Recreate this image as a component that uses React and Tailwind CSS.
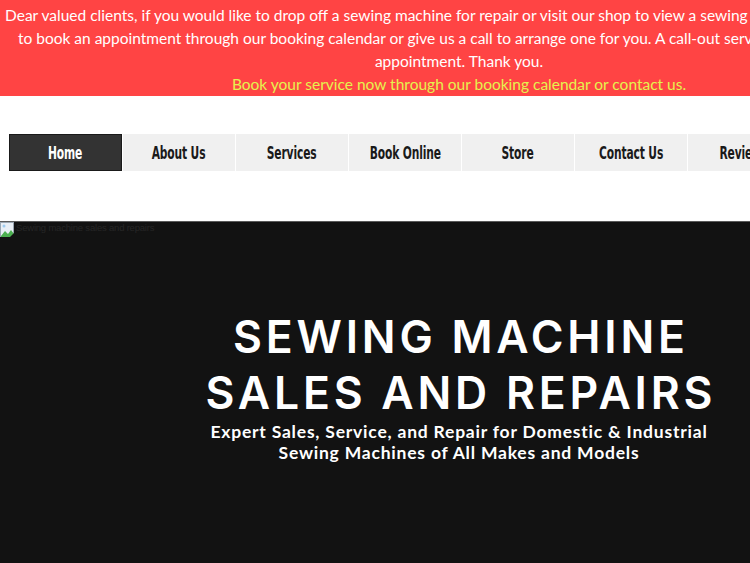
import React from 'react';

const navItems = ['Home', 'About Us', 'Services', 'Book Online', 'Store', 'Contact Us', 'Reviews', 'More'];

function BrokenImage() {
  return (
    <svg width="16" height="16" viewBox="0 0 16 16" className="shrink-0">
      <rect x="0.5" y="0.5" width="13" height="14" fill="#e8eef5" stroke="#9aa6b2" />
      <path d="M1 14 L5 9 L8 12 L11 8 L14 12 L14 15 L1 15 Z" fill="#4caf50" />
      <path d="M10 15 L16 9 L16 15 Z" fill="#121212" />
      <circle cx="4" cy="4" r="1.5" fill="#9ecbf0" />
    </svg>
  );
}

export default function App() {
  return (
    <div className="w-[750px] h-[563px] overflow-hidden bg-white">
      <div className="w-[918px]">
        {/* notice banner */}
        <div className="h-[96px] bg-[#ff4444] pt-[4px] text-center text-[15.5px] leading-[23px] text-white font-['Lato','Open_Sans',sans-serif]">
          <p className="whitespace-nowrap">Dear valued clients, if you would like to drop off a sewing machine for repair or visit our shop to view a sewing machine, please be sure</p>
          <p className="whitespace-nowrap">to book an appointment through our booking calendar or give us a call to arrange one for you. A call-out service is also available by</p>
          <p>appointment. Thank you.</p>
          <p className="text-[#e6f24e]">Book your service now through our booking calendar or contact us.</p>
        </div>

        {/* menu */}
        <div className="h-[125px] pt-[38px] pl-[9px]">
          <ul className="flex h-[37px] gap-[1px] font-['DejaVu_Sans_Condensed','DejaVu_Sans',sans-serif] font-bold text-[17.5px]">
            {navItems.map((item, i) => (
              <li
                key={item}
                className={
                  i === 0
                    ? 'w-[113px] flex items-center justify-center bg-[#333333] border border-[#1a1a1a] text-white'
                    : 'w-[112px] flex items-center justify-center bg-[#f0f0f0] text-[#1a1a1a]'
                }
              >
                <span className="inline-block whitespace-nowrap pt-[2px] scale-x-[0.68] tracking-[-0.2px]">{item}</span>
              </li>
            ))}
          </ul>
        </div>

        {/* hero */}
        <div className="h-[342px] bg-[#121212] border-t border-[#5a5a5a]">
          <div className="flex items-start h-[16px] text-[9.5px] leading-[12px] text-[#262626] font-['Liberation_Sans',Arial,sans-serif]">
            <BrokenImage />
            <span className="tracking-[-0.2px]">Sewing machine sales and repairs</span>
          </div>
          <div className="text-center text-white pt-[71px]">
            <h1 className="font-['Inter',sans-serif] font-semibold text-[44.5px] leading-[56px] tracking-[0.085em] pl-[0.085em]">
              SEWING MACHINE
              <br />
              SALES AND REPAIRS
            </h1>
            <p className="font-['Lato',sans-serif] font-bold text-[17.5px] leading-[21px] tracking-[0.045em]">
              Expert Sales, Service, and Repair for Domestic &amp; Industrial
              <br />
              Sewing Machines of All Makes and Models
            </p>
          </div>
        </div>
      </div>
    </div>
  );
}
